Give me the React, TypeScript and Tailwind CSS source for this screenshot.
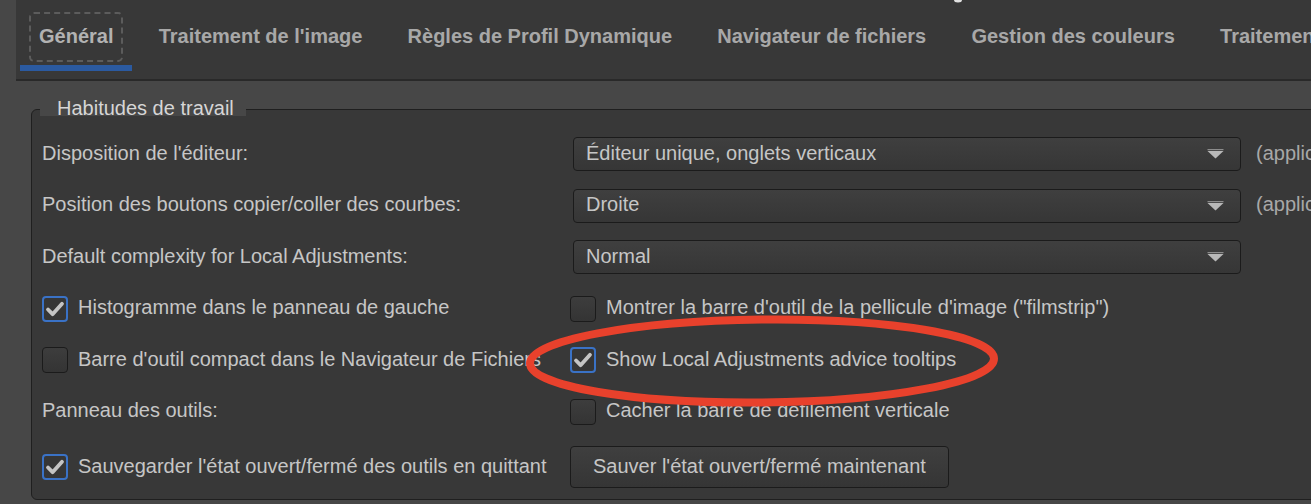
import React from "react";

const FONT = { fontFamily: '"Liberation Sans", Arial, Helvetica, sans-serif' };

function CheckBox({ checked }: { checked: boolean }) {
  if (checked) {
    return (
      <span className="relative w-[26px] h-[26px] shrink-0 rounded-[4px] border-2 border-[#3a72c6] bg-[#363636]">
        <svg className="absolute left-0 top-0" width="22" height="22" viewBox="0 0 22 22">
          <path
            d="M4 11.5 L8.6 16.2 L18 5.8"
            stroke="#c4c4c4"
            strokeWidth="3.8"
            fill="none"
            strokeLinecap="round"
            strokeLinejoin="round"
          />
        </svg>
      </span>
    );
  }
  return (
    <span className="w-[26px] h-[26px] shrink-0 rounded-[4px] border-[1.5px] border-[#1b1b1b] bg-linear-to-b from-[#3d3d3d] to-[#343434]" />
  );
}

function CheckRow({ checked, label }: { checked: boolean; label: string }) {
  return (
    <div className="flex items-center gap-[10px] whitespace-nowrap">
      <CheckBox checked={checked} />
      <span className="text-[20px] text-[#c6c6c6] pb-[3px]">{label}</span>
    </div>
  );
}

function Combo({ value }: { value: string }) {
  return (
    <div className="ml-[3px] w-[668px] h-[34px] shrink-0 rounded-[4px] border border-[#1b1b1b] bg-linear-to-b from-[#3f3f3f] to-[#363636] flex items-center justify-between pl-[12px] pr-[16px]">
      <span className="text-[20px] text-[#c6c6c6] whitespace-nowrap pb-[3px]">{value}</span>
      <svg width="17" height="10" viewBox="0 0 17 10">
        <rect x="0.5" y="0" width="16" height="1.2" fill="#8c8c8c" />
        <path d="M0.5 2 L16.5 2 L8.5 9.5 Z" fill="#b8b8b8" />
      </svg>
    </div>
  );
}

function Tab({ label, active }: { label: string; active?: boolean }) {
  return (
    <div className="flex flex-col shrink-0">
      <div className="px-[9px] pt-[12px]">
        <div
          className={
            active
              ? "h-[50px] px-[8px] pb-[2px] flex items-center rounded-[5px] border-2 border-dashed border-[#5c5c5c] text-[#b2b2b2]"
              : "h-[50px] px-[8px] pb-[2px] flex items-center rounded-[5px] border-2 border-transparent text-[#a8a8a8]"
          }
        >
          <span className="text-[20px] font-bold whitespace-nowrap">{label}</span>
        </div>
      </div>
      <div className={active ? "mt-[3px] h-[6px] bg-[#2b5aa0]" : "mt-[3px] h-[6px]"} />
    </div>
  );
}

export default function App() {
  const tabs = [
    "Général",
    "Traitement de l'image",
    "Règles de Profil Dynamique",
    "Navigateur de fichiers",
    "Gestion des couleurs",
    "Traitement par lot",
  ];
  return (
    <div className="relative w-[1311px] h-[504px] overflow-hidden bg-[#474747]" style={FONT}>
      {/* Tab bar */}
      <div className="ml-[16px] h-[81px] border-b-2 border-[#292929] bg-[#383838] pl-[4px] flex gap-[7.2px]">
        {tabs.map((t, i) => (
          <Tab key={t} label={t} active={i === 0} />
        ))}
      </div>

      {/* Frame */}
      <div className="relative ml-[31px] mt-[28px] w-[1400px] h-[391px] rounded-[6px] border border-[#1f1f1f] bg-[#383838] pt-[27px] pl-[10px]">
        <div className="absolute left-[8px] top-[-13px] h-[19px] bg-[#474747] pl-[17px] pr-[12px]">
          <span className="block leading-[22px] text-[20px] text-[#d6d6d6] whitespace-nowrap">
            Habitudes de travail
          </span>
        </div>

        <div className="flex flex-col gap-[17.5px]">
          <div className="flex items-center h-[34px]">
            <div className="w-[528px] shrink-0 text-[20px] text-[#c6c6c6] whitespace-nowrap pb-[3px]">
              Disposition de l'éditeur:
            </div>
            <Combo value="Éditeur unique, onglets verticaux" />
            <span className="ml-[15px] text-[20px] text-[#a8a8a8] whitespace-nowrap pb-[3px]">
              (application au redémarrage)
            </span>
          </div>

          <div className="flex items-center h-[34px]">
            <div className="w-[528px] shrink-0 text-[20px] text-[#c6c6c6] whitespace-nowrap pb-[3px]">
              Position des boutons copier/coller des courbes:
            </div>
            <Combo value="Droite" />
            <span className="ml-[15px] text-[20px] text-[#a8a8a8] whitespace-nowrap pb-[3px]">
              (application au redémarrage)
            </span>
          </div>

          <div className="flex items-center h-[34px]">
            <div className="w-[528px] shrink-0 text-[20px] text-[#c6c6c6] whitespace-nowrap pb-[3px]">
              Default complexity for Local Adjustments:
            </div>
            <Combo value="Normal" />
          </div>

          <div className="flex items-center h-[34px]">
            <div className="w-[528px] shrink-0">
              <CheckRow checked label="Histogramme dans le panneau de gauche" />
            </div>
            <CheckRow checked={false} label={'Montrer la barre d\'outil de la pellicule d\'image ("filmstrip")'} />
          </div>

          <div className="flex items-center h-[34px]">
            <div className="w-[528px] shrink-0">
              <CheckRow checked={false} label="Barre d'outil compact dans le Navigateur de Fichiers" />
            </div>
            <CheckRow checked label="Show Local Adjustments advice tooltips" />
          </div>

          <div className="flex items-center h-[34px]">
            <div className="w-[528px] shrink-0 text-[20px] text-[#c6c6c6] whitespace-nowrap pb-[3px]">
              Panneau des outils:
            </div>
            <CheckRow checked={false} label="Cacher la barre de défilement verticale" />
          </div>

          <div className="flex items-center h-[42px]">
            <div className="w-[528px] shrink-0">
              <CheckRow checked label="Sauvegarder l'état ouvert/fermé des outils en quittant" />
            </div>
            <button className="h-[42px] px-[22px] pb-[3px] rounded-[4px] border border-[#1b1b1b] bg-linear-to-b from-[#3f3f3f] to-[#353535] text-[20px] text-[#c6c6c6] whitespace-nowrap">
              Sauver l'état ouvert/fermé maintenant
            </button>
          </div>
        </div>
      </div>

      {/* Annotation overlay */}
      <svg className="absolute left-0 top-0 pointer-events-none" width="1311" height="504" viewBox="0 0 1311 504">
        <ellipse cx="958" cy="0" rx="4" ry="2.5" fill="#e0e0e0" />
        <ellipse
          cx="762"
          cy="361"
          rx="232"
          ry="41.5"
          fill="none"
          stroke="#e8412c"
          strokeWidth="8"
          transform="rotate(-0.6 762 361)"
        />
      </svg>
    </div>
  );
}
